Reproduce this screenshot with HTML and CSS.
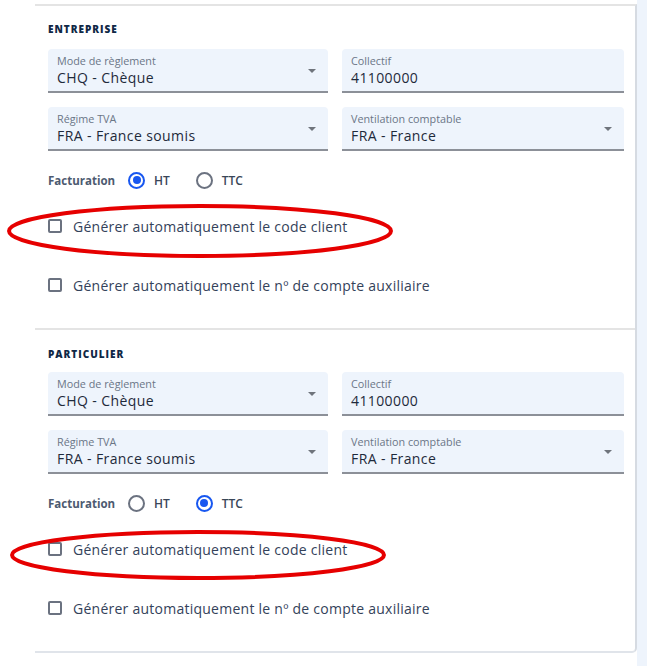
FILE: index.html
```html
<!DOCTYPE html>
<html lang="fr">
<head>
<meta charset="utf-8">
<link rel="stylesheet" href="styles.css">
</head>
<body>
<div class="page">
  <div class="gutter"></div>
  <div class="card">
    <section class="section">
      <h2 class="title">ENTREPRISE</h2>
      <div class="grid">
        <div class="field select"><span class="label">Mode de règlement</span><span class="value">CHQ - Chèque</span><span class="caret"></span></div>
        <div class="field field-wide"><span class="label">Collectif</span><span class="value">41100000</span></div>
        <div class="field select"><span class="label">Régime TVA</span><span class="value">FRA - France soumis</span><span class="caret"></span></div>
        <div class="field field-wide select"><span class="label">Ventilation comptable</span><span class="value">FRA - France</span><span class="caret"></span></div>
      </div>
      <div class="radios">
        <span class="radios-label">Facturation</span>
        <label class="radio"><span class="dot checked"></span>HT</label>
        <label class="radio"><span class="dot"></span>TTC</label>
      </div>
      <div class="check check-first"><span class="box"></span>Générer automatiquement le code client</div>
      <div class="check"><span class="box"></span>Générer automatiquement le nº de compte auxiliaire</div>
      <svg class="ring ring-a" viewBox="0 0 386 54"><ellipse cx="193" cy="27" rx="191" ry="25"/></svg>
    </section>
    <section class="section section-second">
      <h2 class="title">PARTICULIER</h2>
      <div class="grid">
        <div class="field select"><span class="label">Mode de règlement</span><span class="value">CHQ - Chèque</span><span class="caret"></span></div>
        <div class="field field-wide"><span class="label">Collectif</span><span class="value">41100000</span></div>
        <div class="field select"><span class="label">Régime TVA</span><span class="value">FRA - France soumis</span><span class="caret"></span></div>
        <div class="field field-wide select"><span class="label">Ventilation comptable</span><span class="value">FRA - France</span><span class="caret"></span></div>
      </div>
      <div class="radios">
        <span class="radios-label">Facturation</span>
        <label class="radio"><span class="dot"></span>HT</label>
        <label class="radio"><span class="dot checked"></span>TTC</label>
      </div>
      <div class="check check-first"><span class="box"></span>Générer automatiquement le code client</div>
      <div class="check"><span class="box"></span>Générer automatiquement le nº de compte auxiliaire</div>
      <svg class="ring ring-b" viewBox="0 0 376 50"><ellipse cx="188" cy="25" rx="186" ry="23"/></svg>
    </section>
  </div>
  <div class="side"></div>
</div>
</body>
</html>
```

FILE: styles.css
```css
* { box-sizing: border-box; }
html, body { margin: 0; padding: 0; background: #ffffff; }
body { font-family: "Open Sans", "Noto Sans", sans-serif; color: #1e2a3b; }

.page {
  display: grid;
  grid-template-columns: 35px 602px 10px;
  height: 666px;
}
.side { background: #eef4fc; }

.card {
  margin-top: 4px;
  height: 649px;
  border-top: 2px solid #e4e4e4;
  border-right: 2px solid #d6dbe2;
  border-bottom: 2px solid #e0e4ea;
  border-bottom-right-radius: 5px;
  background: #fff;
}

.section {
  position: relative;
  padding: 16px 10px 0 13px;
  height: 322px;
}
.section-second {
  border-top: 2px solid #e4e4e4;
  padding-top: 17px;
}

.title {
  margin: 0;
  font-family: "Open Sans", sans-serif;
  font-size: 10px;
  line-height: 14px;
  font-weight: 800;
  letter-spacing: 1px;
  color: #0f2846;
}

.grid {
  margin-top: 13px;
  display: grid;
  grid-template-columns: 280px 282px;
  column-gap: 14px;
  row-gap: 14px;
}
.section-second .grid { margin-top: 11px; }

.field {
  position: relative;
  height: 44px;
  background: #eef4fc;
  border-bottom: 2px solid #8c9098;
  border-radius: 4px 4px 0 0;
  padding: 5px 9px 0;
  display: flex;
  flex-direction: column;
}
.label {
  font-size: 10.8px;
  line-height: 14px;
  color: #6b7687;
}
.value {
  font-size: 14px;
  line-height: 19px;
  letter-spacing: 0.4px;
  color: #1e2a3b;
  font-weight: 500;
}
.caret {
  position: absolute;
  right: 12px;
  top: 20px;
  width: 0;
  height: 0;
  border-left: 4px solid transparent;
  border-right: 4px solid transparent;
  border-top: 4px solid #6f747c;
}

.radios {
  display: flex;
  align-items: center;
  margin-top: 20px;
  height: 18px;
}
.radios-label {
  font-size: 11.5px;
  font-weight: 700;
  color: #4d5a70;
  margin-right: 12px;
  width: 68px;
}
.radio {
  display: flex;
  align-items: center;
  font-size: 12px;
  font-weight: 600;
  color: #3a4658;
  margin-right: 26px;
}
.dot {
  width: 17px;
  height: 17px;
  border-radius: 50%;
  border: 2px solid #6b7280;
  margin-right: 9px;
  position: relative;
}
.dot.checked { border-color: #1857f0; }
.dot.checked::after {
  content: "";
  position: absolute;
  left: 2.5px;
  top: 2.5px;
  width: 8px;
  height: 8px;
  border-radius: 50%;
  background: #1857f0;
}

.check {
  display: flex;
  align-items: center;
  height: 18px;
  font-size: 14px;
  letter-spacing: 0.25px;
  color: #34425a;
}
.check-first { margin-top: 28px; }
.check + .check { margin-top: 41px; }
.box {
  width: 14px;
  height: 14px;
  border: 2px solid #6b7280;
  border-radius: 2px;
  margin-right: 11px;
}

.ring {
  position: absolute;
  fill: none;
  stroke: #e60000;
  stroke-width: 4;
}
.ring-a { left: -28px; top: 198px; width: 386px; height: 54px; }
.ring-b { left: -25px; top: 200px; width: 376px; height: 50px; }
```
